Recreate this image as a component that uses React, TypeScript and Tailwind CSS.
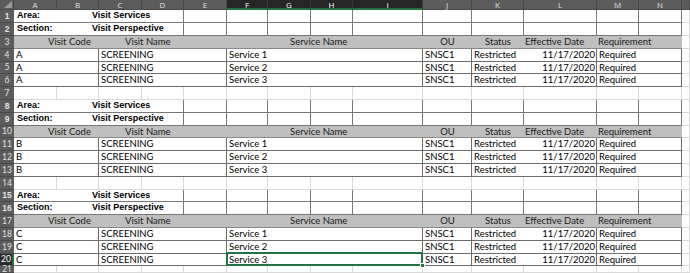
const cal = "font-['Lato','Noto_Sans',sans-serif]";
const arial = "font-['Liberation_Sans',Arial,sans-serif]";

const letters: [string, string, boolean][] = [
  ["A", "w-[43px]", false],
  ["B", "w-[42px]", false],
  ["C", "w-[43px]", false],
  ["D", "w-[42px]", false],
  ["E", "w-[43px]", false],
  ["F", "w-[41px]", true],
  ["G", "w-[43px]", true],
  ["H", "w-[42px]", true],
  ["I", "w-[70px]", true],
  ["J", "w-[49px]", false],
  ["K", "w-[52px]", false],
  ["L", "w-[73px]", false],
  ["M", "w-[42px]", false],
  ["N", "w-[43px]", false],
  ["", "w-[8px]", false],
];

const heights = [
  "h-[13px]", "h-[13px]", "h-[13px]", "h-[13px]", "h-[12px]",
  "h-[13px]", "h-[13px]", "h-[13px]", "h-[13px]", "h-[12px]",
  "h-[13px]", "h-[13px]", "h-[13px]", "h-[13px]", "h-[12px]",
  "h-[13px]", "h-[13px]", "h-[13px]", "h-[13px]", "h-[12px]",
  "h-[7px]",
];

const sections = ["A", "B", "C"];

const RowNum = ({ n, selected }: { n: number; selected?: boolean }) => (
  <div
    className={
      selected
        ? "w-[14px] shrink-0 flex items-center justify-center bg-[#2b2b2b] text-white border-r-2 border-r-[#217346] border-b border-b-[#444] text-[8.5px] leading-none"
        : "w-[14px] shrink-0 flex items-center justify-center bg-[#5c5c5c] text-[#e2e2e2] border-b border-b-[#4a4a4a] text-[8.5px] leading-none"
    }
  >
    {n}
  </div>
);

const Grid = ({ w }: { w: string }) => (
  <div className={`${w} shrink-0 border-r border-b border-[#dadada]`} />
);

const BlankRow = ({ n, h }: { n: number; h: string }) => (
  <div className={`flex ${h}`}>
    <RowNum n={n} />
    {letters.map(([l, w]) => (
      <Grid key={l + w} w={w} />
    ))}
  </div>
);

const AreaRow = ({ n, h, label, value }: { n: number; h: string; label: string; value: string }) => (
  <div className={`flex ${h} ${arial} font-bold text-[9px] text-black`}>
    <RowNum n={n} />
    <div className="w-[43px] shrink-0 flex items-center pl-[3px] border-b border-[#777]">{label}</div>
    <div className="w-[127px] shrink-0 flex items-center pl-[35px] border-b border-r border-[#777] whitespace-nowrap">
      {value}
    </div>
    {letters.slice(4, 14).map(([l, w]) => (
      <div key={l} className={`${w} shrink-0 border-r border-b border-[#777]`} />
    ))}
    <Grid w="w-[8px]" />
  </div>
);

const HeadRow = ({ n, h }: { n: number; h: string }) => (
  <div className={`flex ${h} ${cal} text-[9.5px] text-[#1a1a1a] leading-none`}>
    <RowNum n={n} />
    <div className="w-[668px] shrink-0 flex items-center bg-[#bfbfbf] border-b border-[#8a8a8a]">
      <div className="w-[85px] shrink-0 pl-[34px]">Visit Code</div>
      <div className="w-[128px] shrink-0 pl-[26px]">Visit Name</div>
      <div className="w-[196px] shrink-0 pl-[63px]">Service Name</div>
      <div className="w-[49px] shrink-0 text-center">OU</div>
      <div className="w-[52px] shrink-0 text-center">Status</div>
      <div className="w-[73px] shrink-0 pl-[1px] whitespace-nowrap">Effective Date</div>
      <div className="w-[85px] shrink-0 pl-[1px]">Requirement</div>
    </div>
    <Grid w="w-[8px]" />
  </div>
);

const DataRow = ({
  n,
  h,
  code,
  service,
  selected,
}: {
  n: number;
  h: string;
  code: string;
  service: string;
  selected?: boolean;
}) => (
  <div className={`flex ${h} ${cal} text-[9.5px] text-black leading-none`}>
    <RowNum n={n} selected={selected} />
    <div className="w-[85px] shrink-0 flex items-center pl-[2px] border-r border-b border-[#6d6d6d]">{code}</div>
    <div className="w-[128px] shrink-0 flex items-center pl-[2px] border-r border-b border-[#6d6d6d]">SCREENING</div>
    <div className="relative w-[196px] shrink-0 flex items-center pl-[2px] border-r border-b border-[#6d6d6d]">
      {service}
      {selected && (
        <>
          <div className="absolute -top-[2px] -left-[1px] -right-[1px] -bottom-[1px] border-2 border-[#217346]" />
          <div className="absolute -right-[3px] -bottom-[3px] w-[5px] h-[5px] bg-[#217346] border border-white" />
        </>
      )}
    </div>
    <div className="w-[49px] shrink-0 flex items-center pl-[2px] border-r border-b border-[#6d6d6d]">SNSC1</div>
    <div className="w-[52px] shrink-0 flex items-center pl-[2px] border-b border-[#6d6d6d]">Restricted</div>
    <div className="w-[73px] shrink-0 flex items-center justify-end pr-[1px] border-r border-b border-[#6d6d6d]">
      11/17/2020
    </div>
    <div className="w-[85px] shrink-0 flex items-center pl-[2px] border-r border-b border-[#6d6d6d]">Required</div>
    <Grid w="w-[8px]" />
  </div>
);

export default function App() {
  const rows: React.ReactNode[] = [];
  let n = 1;
  sections.forEach((code, si) => {
    if (si > 0) {
      rows.push(<BlankRow key={n} n={n} h={heights[n - 1]} />);
      n++;
    }
    rows.push(<AreaRow key={n} n={n} h={heights[n - 1]} label="Area:" value="Visit Services" />);
    n++;
    rows.push(<AreaRow key={n} n={n} h={heights[n - 1]} label="Section:" value="Visit Perspective" />);
    n++;
    rows.push(<HeadRow key={n} n={n} h={heights[n - 1]} />);
    n++;
    [1, 2, 3].forEach((s) => {
      rows.push(
        <DataRow
          key={n}
          n={n}
          h={heights[n - 1]}
          code={code}
          service={`Service ${s}`}
          selected={n === 20}
        />
      );
      n++;
    });
  });
  rows.push(<BlankRow key={21} n={21} h={heights[20]} />);

  return (
    <div className="w-[690px] h-[273px] overflow-hidden bg-white flex flex-col">
      <div className="flex h-[10px] shrink-0 text-[8px] leading-[9px] font-['Open_Sans',sans-serif]">
        <div className="relative w-[14px] shrink-0 bg-[#5c5c5c] border-r border-b border-[#4a4a4a]">
          <svg className="absolute right-[1px] bottom-[1px]" width="8" height="7" viewBox="0 0 8 7">
            <polygon points="8,0 8,7 0,7" fill="#9a9a9a" />
          </svg>
        </div>
        {letters.map(([l, w, sel]) => (
          <div
            key={l + w}
            className={
              sel
                ? `${w} shrink-0 flex items-center justify-center bg-[#262626] text-white border-r border-[#3a3a3a] border-b-2 border-b-[#217346]`
                : `${w} shrink-0 flex items-center justify-center bg-[#5c5c5c] text-[#e0e0e0] border-r border-b border-[#4a4a4a]`
            }
          >
            {l}
          </div>
        ))}
      </div>
      {rows}
    </div>
  );
}
